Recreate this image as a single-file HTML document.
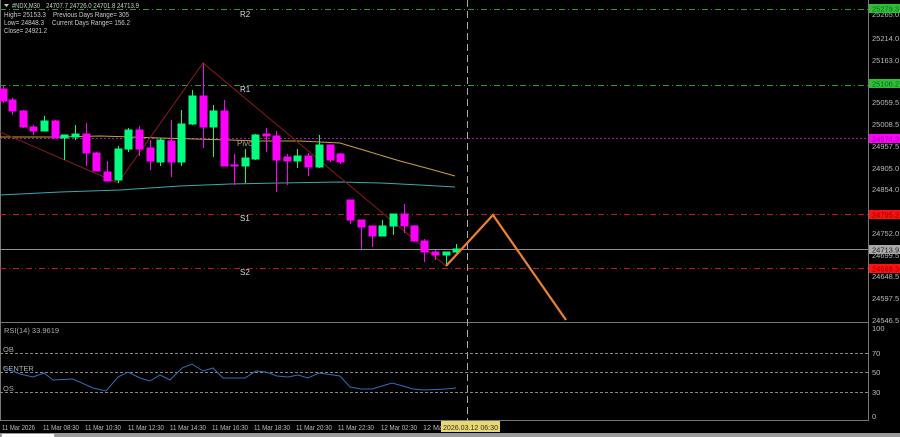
<!DOCTYPE html>
<html><head><meta charset="utf-8"><style>
html,body{margin:0;padding:0;background:#000;width:900px;height:437px;overflow:hidden}
svg{display:block;font-family:"Liberation Sans",sans-serif}
</style></head><body>
<svg width="900" height="437" viewBox="0 0 900 437" xmlns="http://www.w3.org/2000/svg">
<rect width="900" height="437" fill="#000"/>
<line x1="0.5" y1="0" x2="0.5" y2="420" stroke="#777"/>
<line x1="868.5" y1="0" x2="868.5" y2="420" stroke="#777"/>
<line x1="0" y1="322.5" x2="869" y2="322.5" stroke="#777"/>
<line x1="0" y1="420.5" x2="869" y2="420.5" stroke="#777"/>
<rect x="0" y="433" width="900" height="4" fill="#9a9a9a"/>
<rect x="2" y="434" width="52" height="3" fill="#fff"/>
<g stroke-width="1" fill="none">
<line x1="0" y1="9.5" x2="868" y2="9.5" stroke="#2f9a2f" stroke-dasharray="6,3,1,3"/>
<line x1="0" y1="85.5" x2="868" y2="85.5" stroke="#2f9a2f" stroke-dasharray="6,3,1,3"/>
<line x1="0" y1="138.5" x2="868" y2="138.5" stroke="#a020a0" stroke-dasharray="2,2"/>
<line x1="0" y1="214.5" x2="868" y2="214.5" stroke="#c01818" stroke-dasharray="6,3,1,3"/>
<line x1="0" y1="249.5" x2="868" y2="249.5" stroke="#909090"/>
<line x1="0" y1="268.5" x2="868" y2="268.5" stroke="#c01818" stroke-dasharray="6,3,1,3"/>
<line x1="467.5" y1="0" x2="467.5" y2="421" stroke="#aaa" stroke-dasharray="7,4"/>
</g>
<g fill="#ddd" font-size="8">
<text x="240" y="17">R2</text><text x="240" y="92">R1</text>
<text x="237" y="146" fill="#aaa">Pivot</text>
<text x="240" y="221">S1</text><text x="240" y="275">S2</text>
</g>
<polyline fill="none" stroke="#c8a040" stroke-width="1" points="0,137 60,137 100,136 160,138 230,140 260,141 300,141 340,143 370,152 400,161 430,169 455,176"/>
<polyline fill="none" stroke="#3aa8b0" stroke-width="1" points="0,195 60,192 120,190 180,186 230,184 280,183 340,182 380,183 420,185 455,187"/>
<polyline fill="none" stroke="#8b1a1a" stroke-width="1" points="0,132 118,183 203,63 446,266"/>
<g stroke-width="1">
<g stroke="#ff00ff" fill="#ff00ff">
<line x1="3.5" y1="86" x2="3.5" y2="103"/><rect x="0" y="89" width="7" height="12"/>
<line x1="12.5" y1="98" x2="12.5" y2="115"/><rect x="9" y="100" width="7" height="11"/>
<line x1="23.5" y1="110" x2="23.5" y2="128"/><rect x="20" y="111" width="7" height="16"/>
<line x1="33.5" y1="125" x2="33.5" y2="135"/><rect x="30" y="127" width="7" height="4"/>
<line x1="55.5" y1="120" x2="55.5" y2="138"/><rect x="52" y="121" width="7" height="17"/>
<line x1="86.5" y1="123" x2="86.5" y2="166"/><rect x="83" y="134" width="7" height="19"/>
<line x1="96.5" y1="152" x2="96.5" y2="171"/><rect x="93" y="153" width="7" height="18"/>
<line x1="107.5" y1="161" x2="107.5" y2="181"/><rect x="104" y="172" width="7" height="9"/>
<line x1="139.5" y1="126" x2="139.5" y2="156"/><rect x="136" y="130" width="7" height="19"/>
<line x1="150.5" y1="140" x2="150.5" y2="170"/><rect x="147" y="148" width="7" height="13"/>
<line x1="171.5" y1="120" x2="171.5" y2="177"/><rect x="168" y="141" width="7" height="21"/>
<line x1="203.5" y1="63" x2="203.5" y2="148"/><rect x="200" y="96" width="7" height="31"/>
<line x1="224.5" y1="100" x2="224.5" y2="166"/><rect x="221" y="111" width="7" height="55"/>
<line x1="234.5" y1="154" x2="234.5" y2="185"/><rect x="231" y="165" width="7" height="1"/>
<line x1="266.5" y1="128" x2="266.5" y2="152"/><rect x="263" y="134" width="7" height="2"/>
<line x1="276.5" y1="131" x2="276.5" y2="192"/><rect x="273" y="136" width="7" height="24"/>
<line x1="287.5" y1="154" x2="287.5" y2="185"/><rect x="284" y="157" width="7" height="4"/>
<line x1="308.5" y1="153" x2="308.5" y2="176"/><rect x="305" y="156" width="7" height="11"/>
<line x1="330.5" y1="145" x2="330.5" y2="162"/><rect x="327" y="145" width="7" height="15"/>
<line x1="340.5" y1="153" x2="340.5" y2="164"/><rect x="337" y="154" width="7" height="8"/>
<line x1="350.5" y1="200" x2="350.5" y2="224"/><rect x="347" y="200" width="7" height="20"/>
<line x1="361.5" y1="220" x2="361.5" y2="249"/><rect x="358" y="220" width="7" height="7"/>
<line x1="372.5" y1="226" x2="372.5" y2="247"/><rect x="369" y="226" width="7" height="10"/>
<line x1="404.5" y1="204" x2="404.5" y2="233"/><rect x="401" y="214" width="7" height="12"/>
<line x1="414.5" y1="225" x2="414.5" y2="242"/><rect x="411" y="226" width="7" height="15"/>
<line x1="424.5" y1="239" x2="424.5" y2="262"/><rect x="421" y="241" width="7" height="11"/>
<line x1="435.5" y1="250" x2="435.5" y2="260"/><rect x="432" y="252" width="7" height="3"/>
</g>
<g stroke="#00ff80" fill="#00ff80">
<line x1="44.5" y1="116" x2="44.5" y2="131"/><rect x="41" y="121" width="7" height="10"/>
<line x1="64.5" y1="135" x2="64.5" y2="160"/><rect x="61" y="135" width="7" height="3"/>
<line x1="75.5" y1="125" x2="75.5" y2="140"/><rect x="72" y="134" width="7" height="3"/>
<line x1="118.5" y1="146" x2="118.5" y2="183"/><rect x="115" y="149" width="7" height="31"/>
<line x1="128.5" y1="128" x2="128.5" y2="152"/><rect x="125" y="130" width="7" height="19"/>
<line x1="160.5" y1="138" x2="160.5" y2="166"/><rect x="157" y="140" width="7" height="22"/>
<line x1="181.5" y1="110" x2="181.5" y2="166"/><rect x="178" y="124" width="7" height="38"/>
<line x1="192.5" y1="90" x2="192.5" y2="125"/><rect x="189" y="96" width="7" height="28"/>
<line x1="213.5" y1="105" x2="213.5" y2="157"/><rect x="210" y="111" width="7" height="16"/>
<line x1="245.5" y1="149" x2="245.5" y2="183"/><rect x="242" y="158" width="7" height="8"/>
<line x1="255.5" y1="134" x2="255.5" y2="160"/><rect x="252" y="135" width="7" height="24"/>
<line x1="297.5" y1="149" x2="297.5" y2="168"/><rect x="294" y="156" width="7" height="5"/>
<line x1="319.5" y1="135" x2="319.5" y2="168"/><rect x="316" y="145" width="7" height="22"/>
<line x1="382.5" y1="220" x2="382.5" y2="236"/><rect x="379" y="226" width="7" height="10"/>
<line x1="393.5" y1="214" x2="393.5" y2="235"/><rect x="390" y="214" width="7" height="12"/>
<line x1="446.5" y1="252" x2="446.5" y2="265"/><rect x="443" y="252" width="7" height="3"/>
<line x1="456.5" y1="244" x2="456.5" y2="253"/><rect x="453" y="249" width="7" height="3"/>
</g>
</g>
<polyline fill="none" stroke="#f08030" stroke-width="2.2" points="446,266 493,215 566,320"/>
<g fill="#ccc" font-size="7.5" lengthAdjust="spacingAndGlyphs">
<path d="M4 4 L9 4 L6.5 7 Z" fill="#ccc"/>
<text x="12" y="8" textLength="28" lengthAdjust="spacingAndGlyphs">#NDX,M30</text>
<text x="46" y="8" textLength="93" lengthAdjust="spacingAndGlyphs">24707.7 24726.0 24701.8 24713.9</text>
<text x="4" y="17" textLength="42" lengthAdjust="spacingAndGlyphs">High= 25153.3</text>
<text x="53" y="17" textLength="76" lengthAdjust="spacingAndGlyphs">Previous Days Range= 305</text>
<text x="4" y="25" textLength="40" lengthAdjust="spacingAndGlyphs">Low= 24848.3</text>
<text x="52" y="25" textLength="78" lengthAdjust="spacingAndGlyphs">Current Days Range= 156.2</text>
<text x="4" y="33" textLength="43" lengthAdjust="spacingAndGlyphs">Close= 24921.2</text>
</g>
<g fill="#bbb" font-size="7.5">
<text x="872" y="17">25265.0</text><text x="872" y="41">25214.0</text>
<text x="872" y="63">25163.0</text><text x="872" y="105">25059.5</text>
<text x="872" y="127">25008.5</text><text x="872" y="149">24957.5</text>
<text x="872" y="171">24905.0</text><text x="872" y="192">24854.0</text>
<text x="872" y="236">24752.0</text><text x="872" y="258">24699.5</text>
<text x="872" y="279">24648.5</text><text x="872" y="301">24597.5</text>
<text x="872" y="323">24546.5</text>
<text x="872" y="331">100</text><text x="872" y="356">70</text>
<text x="872" y="375">50</text><text x="872" y="395">30</text>
<text x="872" y="419">0</text>
</g>
<g font-size="7.5">
<rect x="869" y="4" width="31" height="9" fill="#2fbf2f"/><text x="872" y="11.5" fill="#064">25279.3</text>
<rect x="869" y="79" width="31" height="9" fill="#2fbf2f"/><text x="872" y="86.5" fill="#064">25106.2</text>
<rect x="869" y="134" width="31" height="9" fill="#ff00ff"/><text x="872" y="141.5" fill="#808">24974.3</text>
<rect x="869" y="210" width="31" height="9" fill="#ff1010"/><text x="872" y="217.5" fill="#800">24795.2</text>
<rect x="869" y="245" width="31" height="9" fill="#a8a8a8"/><text x="872" y="252.5" fill="#222">24713.9</text>
<rect x="869" y="264" width="31" height="9" fill="#ff1010"/><text x="872" y="271.5" fill="#800">24669.3</text>
</g>
<g stroke="#888" stroke-dasharray="3,2">
<line x1="0" y1="353.5" x2="868" y2="353.5"/>
<line x1="0" y1="372.5" x2="868" y2="372.5"/>
<line x1="0" y1="392.5" x2="868" y2="392.5"/>
</g>
<g fill="#aaa" font-size="7.5">
<text x="4" y="333">RSI(14) 33.9619</text>
<text x="3" y="352">OB</text><text x="3" y="371">CENTER</text><text x="3" y="391">OS</text>
</g>
<polyline fill="none" stroke="#3a6ab8" stroke-width="1" points="3,367 20,374 33,377 44,373 53,380 73,379 93,388 106,391 118,377 128,372 140,378 150,381 160,375 170,380 182,368 192,364 203,371 213,368 223,378 245,378 256,371 266,372 277,376 288,377 298,375 308,378 319,373 340,376 350,387 361,389 372,389 392,383 403,386 413,389 424,390 446,389 456,388"/>
<g fill="#bbb" font-size="7.2">
<text x="2" y="430" textLength="33" lengthAdjust="spacingAndGlyphs">11 Mar 2026</text>
<text x="43" y="430" textLength="36" lengthAdjust="spacingAndGlyphs">11 Mar 08:30</text>
<text x="85" y="430" textLength="36" lengthAdjust="spacingAndGlyphs">11 Mar 10:30</text>
<text x="128" y="430" textLength="36" lengthAdjust="spacingAndGlyphs">11 Mar 12:30</text>
<text x="170" y="430" textLength="36" lengthAdjust="spacingAndGlyphs">11 Mar 14:30</text>
<text x="212" y="430" textLength="36" lengthAdjust="spacingAndGlyphs">11 Mar 16:30</text>
<text x="254" y="430" textLength="36" lengthAdjust="spacingAndGlyphs">11 Mar 18:30</text>
<text x="296" y="430" textLength="36" lengthAdjust="spacingAndGlyphs">11 Mar 20:30</text>
<text x="338" y="430" textLength="36" lengthAdjust="spacingAndGlyphs">11 Mar 22:30</text>
<text x="381" y="430" textLength="36" lengthAdjust="spacingAndGlyphs">12 Mar 02:30</text>
<text x="423" y="430">12 Ma</text>
</g>
<rect x="441" y="421" width="59" height="11" fill="#e8d870"/>
<text x="443" y="430" font-size="7.5" fill="#333" textLength="55" lengthAdjust="spacingAndGlyphs">2026.03.12 06:30</text>
</svg>
</body></html>
